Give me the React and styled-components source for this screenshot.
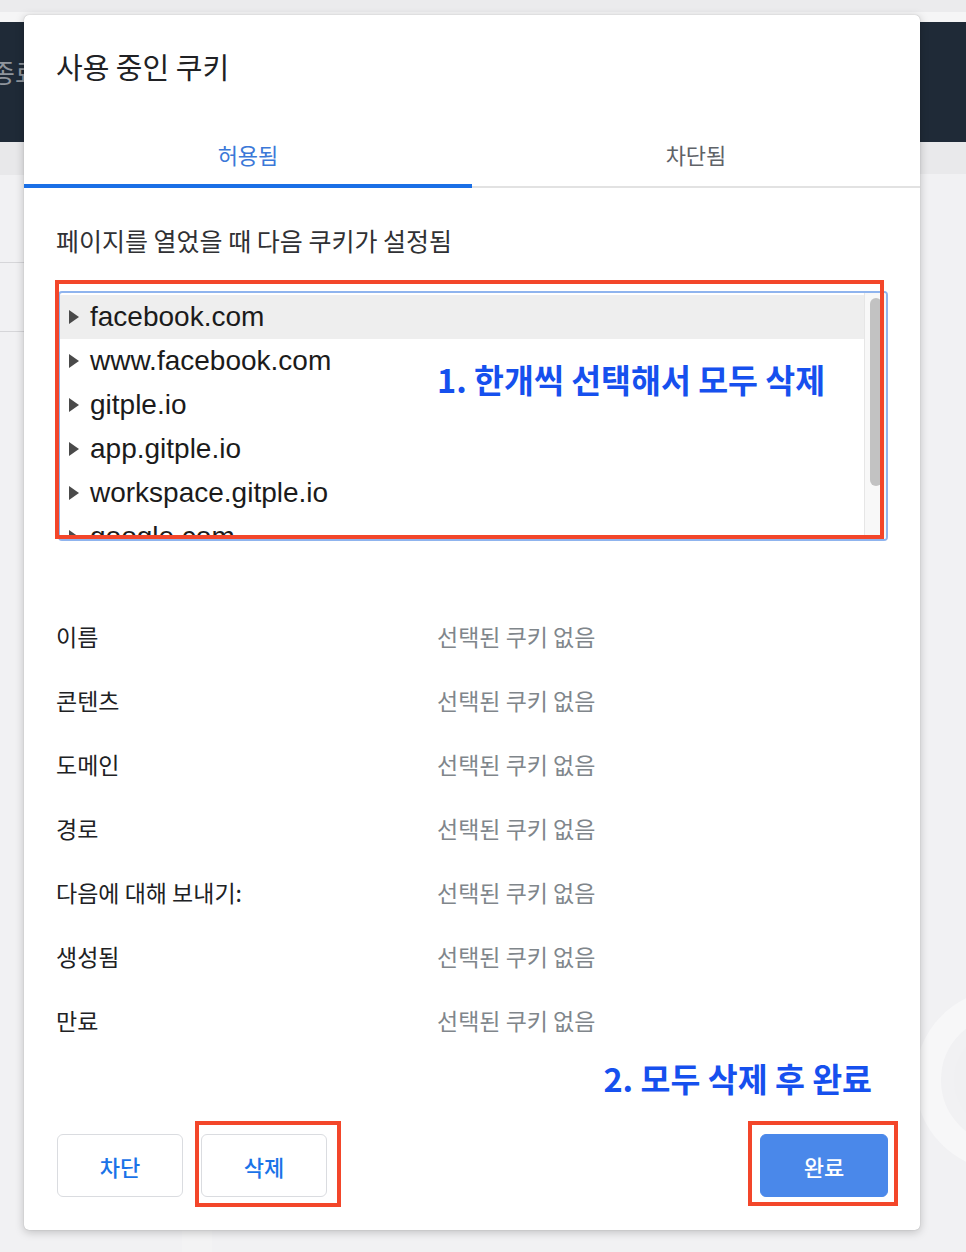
import React from 'react';
import styled, { createGlobalStyle } from 'styled-components';

const GlobalStyle = createGlobalStyle`
  html, body {
    margin: 0;
    padding: 0;
  }
  body {
    font-family: "Noto Sans CJK KR", "Noto Sans", sans-serif;
    background: #ececee;
  }
`;

const KR = `"Noto Sans CJK KR", "Noto Sans", sans-serif`;
const LATIN = `"Liberation Sans", "Noto Sans CJK KR", sans-serif`;

const domains = [
  'facebook.com',
  'www.facebook.com',
  'gitple.io',
  'app.gitple.io',
  'workspace.gitple.io',
  'google.com',
];

const details = ['이름', '콘텐츠', '도메인', '경로', '다음에 대해 보내기:', '생성됨', '만료'];

const App = () => {
  return (
    <>
      <GlobalStyle />
      <Page>
        <Chrome />
        <ChromeEdge />
        <Header>
          <ExitText>종료</ExitText>
        </Header>
        <Backdrop>
          <Sidebar>
            <SubBand />
            <SideItem $h={87} />
            <SideItem $h={68} />
          </Sidebar>
          <Gutter />
          <Main>
            <Watermark width="120" height="200" viewBox="0 0 120 200">
              <circle cx="100" cy="100" r="78" fill="none" stroke="#f7f7f8" strokeWidth="26" />
              <circle cx="100" cy="100" r="52" fill="#f0f0f2" />
            </Watermark>
          </Main>
        </Backdrop>

        <Dialog>
          <Title>사용 중인 쿠키</Title>
          <TabBar>
            <Tab $active>허용됨</Tab>
            <Tab>차단됨</Tab>
          </TabBar>

          <Content>
            <Subtitle>페이지를 열었을 때 다음 쿠키가 설정됨</Subtitle>

            <ListWrap>
              <TreeBox>
                <Items>
                  {domains.map((d, i) => (
                    <TreeRow key={d} $selected={i === 0}>
                      <Caret />
                      {d}
                    </TreeRow>
                  ))}
                </Items>
                <Track>
                  <Thumb />
                </Track>
              </TreeBox>
              <ListMark />
              <Note1>1. 한개씩 선택해서 모두 삭제</Note1>
            </ListWrap>

            <DetailGrid>
              {details.map((label) => (
                <React.Fragment key={label}>
                  <DetailLabel>{label}</DetailLabel>
                  <DetailValue>선택된 쿠키 없음</DetailValue>
                </React.Fragment>
              ))}
            </DetailGrid>

            <Note2>2. 모두 삭제 후 완료</Note2>
          </Content>

          <Footer>
            <ButtonGroup>
              <Button>차단</Button>
              <Marked $l={6} $r={14} $t={13} $b={10}>
                <Button>삭제</Button>
              </Marked>
            </ButtonGroup>
            <Marked $l={12} $r={10} $t={13} $b={9}>
              <Button $primary>완료</Button>
            </Marked>
          </Footer>
        </Dialog>
      </Page>
    </>
  );
};

const Page = styled.div`
  position: relative;
  width: 966px;
  height: 1252px;
  overflow: hidden;
  display: flex;
  flex-direction: column;
`;

const Chrome = styled.div`
  height: 12px;
  background: #ebebed;
`;

const ChromeEdge = styled.div`
  height: 10px;
  background: #f5f5f6;
`;

const Header = styled.div`
  height: 120px;
  background: #1f2a37;
  display: flex;
  align-items: center;
  padding-bottom: 22px;
  box-sizing: border-box;
`;

const ExitText = styled.span`
  margin-left: -9px;
  font-family: ${KR};
  font-size: 26px;
  color: #8f959c;
`;

const Backdrop = styled.div`
  flex: 1;
  display: flex;
`;

const Sidebar = styled.div`
  width: 182px;
  background: #f1f1f3;
  display: flex;
  flex-direction: column;
`;

const SubBand = styled.div`
  height: 33px;
  background: #e8e8ea;
`;

const SideItem = styled.div`
  height: ${(p) => p.$h}px;
  border-bottom: 1px solid #d6d6d9;
`;

const Gutter = styled.div`
  width: 30px;
  background: #f3f3f4;
`;

const Main = styled.div`
  flex: 1;
  position: relative;
  background: linear-gradient(#e9e9eb 0, #e9e9eb 32px, #f1f1f3 32px);
`;

const Watermark = styled.svg`
  position: absolute;
  right: -60px;
  top: 838px;
`;

const Dialog = styled.div`
  position: absolute;
  top: 15px;
  left: 24px;
  width: 896px;
  height: 1215px;
  background: #fff;
  border-radius: 5px;
  box-shadow: 0 2px 10px rgba(0, 0, 0, 0.22), 0 0 1px rgba(0, 0, 0, 0.3);
  display: flex;
  flex-direction: column;
  box-sizing: border-box;
`;

const Title = styled.h1`
  margin: 31px 32px 0;
  font-family: ${KR};
  font-weight: 400;
  font-size: 29px;
  line-height: 40px;
  color: #202124;
`;

const TabBar = styled.div`
  margin-top: 42px;
  display: flex;
  border-bottom: 2px solid #e2e2e2;
`;

const Tab = styled.div`
  position: relative;
  flex: 1;
  height: 58px;
  padding-bottom: 6px;
  box-sizing: border-box;
  display: flex;
  align-items: center;
  justify-content: center;
  font-family: ${KR};
  font-size: 22px;
  color: ${(p) => (p.$active ? '#3b78d8' : '#5f6368')};

  &::after {
    content: '';
    display: ${(p) => (p.$active ? 'block' : 'none')};
    position: absolute;
    left: 0;
    right: 0;
    bottom: -2px;
    height: 4px;
    background: #1a6fe6;
  }
`;

const Content = styled.div`
  padding: 0 32px;
  display: flex;
  flex-direction: column;
`;

const Subtitle = styled.div`
  margin-top: 36px;
  font-family: ${KR};
  font-size: 25px;
  line-height: 32px;
  color: #303134;
`;

const ListWrap = styled.div`
  position: relative;
  margin-top: 35px;
`;

const TreeBox = styled.div`
  height: 250px;
  margin-left: 2px;
  border: 2px solid #8fb4ee;
  border-radius: 4px;
  box-sizing: border-box;
  display: flex;
  overflow: hidden;
`;

const Items = styled.div`
  flex: 1;
  padding-top: 2px;
  overflow: hidden;
`;

const TreeRow = styled.div`
  height: 44px;
  display: flex;
  align-items: center;
  padding-left: 9px;
  font-family: ${LATIN};
  font-size: 28px;
  color: #1b1b1b;
  background: ${(p) => (p.$selected ? '#eeeeee' : 'transparent')};
  white-space: nowrap;
`;

const Caret = styled.span`
  width: 0;
  height: 0;
  border-top: 7px solid transparent;
  border-bottom: 7px solid transparent;
  border-left: 10px solid #4a4a4a;
  margin-right: 11px;
`;

const Track = styled.div`
  width: 22px;
  background: #f8f8f8;
  border-left: 1px solid #e6e6e6;
  box-sizing: border-box;
  padding: 5px 4px 0 5px;
`;

const Thumb = styled.div`
  height: 188px;
  border-radius: 6px;
  background: #c2c2c2;
`;

const ListMark = styled.div`
  position: absolute;
  top: -11px;
  left: -1px;
  right: 4px;
  bottom: 2px;
  border: 4px solid #f3462a;
  pointer-events: none;
`;

const Note1 = styled.div`
  position: absolute;
  left: 381px;
  top: 68px;
  font-family: ${KR};
  font-weight: 700;
  font-size: 32.5px;
  line-height: 40px;
  color: #1650ee;
  white-space: nowrap;
`;

const DetailGrid = styled.div`
  margin-top: 63px;
  display: grid;
  grid-template-columns: 381px 1fr;
  grid-auto-rows: 64px;
  align-items: center;
  font-family: ${KR};
  font-size: 23px;
`;

const DetailLabel = styled.div`
  color: #202124;
`;

const DetailValue = styled.div`
  color: #80868b;
`;

const Note2 = styled.div`
  margin-top: 6px;
  align-self: flex-end;
  padding-right: 16px;
  font-family: ${KR};
  font-weight: 700;
  font-size: 32.5px;
  line-height: 40px;
  color: #1650ee;
`;

const Footer = styled.div`
  margin-top: 36px;
  padding: 0 32px 0 33px;
  display: flex;
  justify-content: space-between;
  align-items: center;
`;

const ButtonGroup = styled.div`
  display: flex;
  gap: 18px;
`;

const Marked = styled.div`
  position: relative;

  &::after {
    content: '';
    position: absolute;
    left: -${(p) => p.$l}px;
    right: -${(p) => p.$r}px;
    top: -${(p) => p.$t}px;
    bottom: -${(p) => p.$b}px;
    border: 4px solid #f3462a;
    pointer-events: none;
  }
`;

const Button = styled.button`
  width: ${(p) => (p.$primary ? 128 : 126)}px;
  height: 63px;
  border-radius: 6px;
  border: 1px solid ${(p) => (p.$primary ? '#4a88ea' : '#dadce0')};
  background: ${(p) => (p.$primary ? '#4a88ea' : '#fff')};
  color: ${(p) => (p.$primary ? '#fff' : '#1a73e8')};
  font-family: ${KR};
  font-size: 22px;
  font-weight: 500;
  padding: 0;
  display: block;
`;

export default App;
